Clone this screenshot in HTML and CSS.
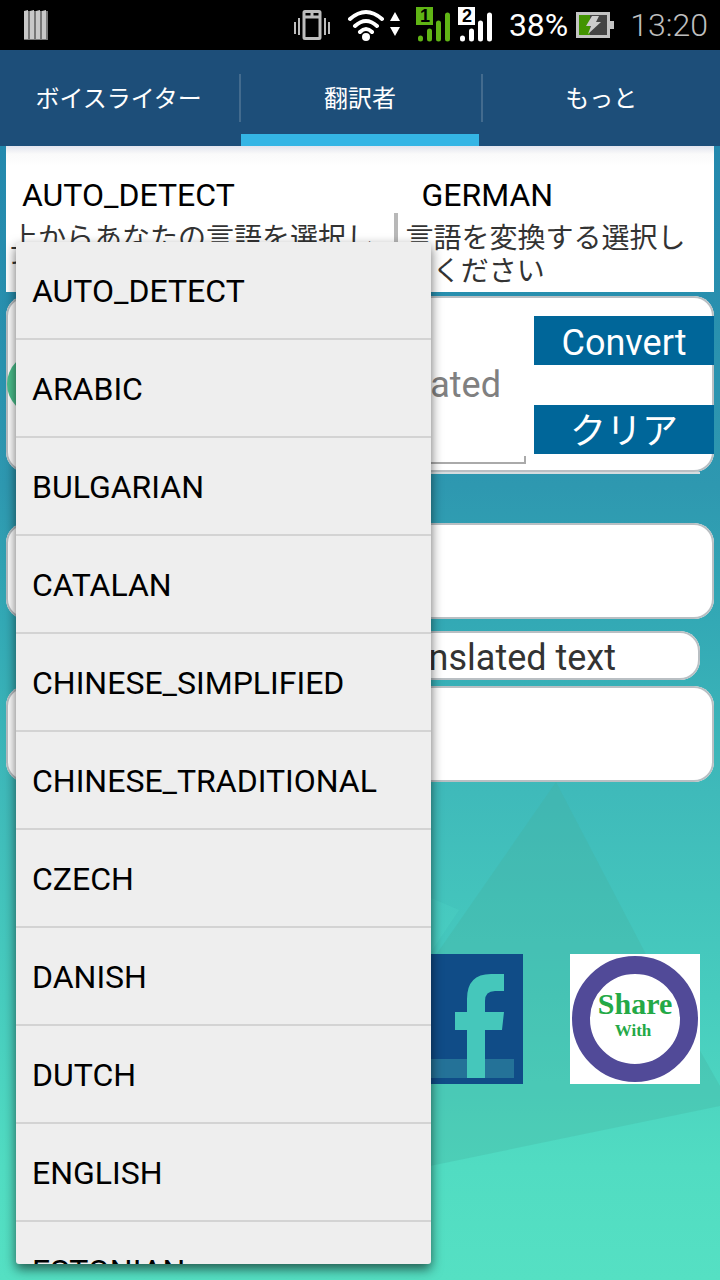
FILE: index.html
```html
<!DOCTYPE html>
<html lang="ja">
<head>
  <meta charset="UTF-8">
  <meta name="viewport" content="width=device-width, initial-scale=1">
  <title>翻訳者</title>
  <link rel="stylesheet" href="styles.css">
</head>
<body>

  <header class="status">
    <svg class="bars" width="24" height="30" viewBox="0 0 24 30">
      <path fill="#777" d="M0 1h24v29H0z"/>
      <path fill="#c8c8c8" d="M0 1l4-1v29H0zM6 1l4-1v29H6zM12 1l4-1v29h-4zM18 1l4-1v29h-4z"/>
    </svg>
    <svg width="38" height="34" viewBox="0 0 38 34">
      <path fill="none" stroke="#bdbdbd" stroke-width="3" d="M12 3.500h14a1 1 0 0 1 1 1v25a1 1 0 0 1-1 1H12a1 1 0 0 1-1-1v-25a1 1 0 0 1 1-1zM11 9h16M19 4v4"/>
      <path fill="none" stroke="#bdbdbd" stroke-width="2" d="M2 14v12M6 10v17M32 10v17M36 14v12"/>
    </svg>
    <svg class="wifi" width="54" height="34" viewBox="0 0 54 34">
      <g fill="none" stroke="#fff" stroke-width="4" stroke-linecap="round">
        <path d="M3 11q16-14 32 0M8 18q11-10 22 0M13 24q6-6 12 0"/>
      </g>
      <circle cx="19" cy="29" r="4" fill="#fff"/>
      <path fill="#fff" d="M48 4l5 9H43zM48 28l5-9H43z"/>
    </svg>
    <svg class="signal green" width="34" height="36" viewBox="0 0 34 36">
      <path class="fill" d="M0 0h17v18H0z"/>
      <text x="9" y="15" text-anchor="middle">1</text>
      <path class="wave" d="M4.500 31v1M13.500 24v8M22.500 16v16M31.500 8v24"/>
    </svg>
    <svg class="signal white" width="34" height="36" viewBox="0 0 34 36">
      <path class="fill" d="M0 0h17v18H0z"/>
      <text x="9" y="15" text-anchor="middle">2</text>
      <path class="wave" d="M4.500 31v1M13.500 24v8M22.500 16v16M31.500 8v24"/>
    </svg>
    <span class="percent">38%</span>
    <svg class="battery" width="38" height="26" viewBox="0 0 38 26">
      <path fill="#c4c4c4" d="M0 0h34v9h4v8h-4v9H0z"/>
      <path fill="#444" d="M3 3h28v20H3z"/>
      <path fill="#429400" d="M3 3h11v20H3z"/>
      <path fill="#ccc" d="M16 4h7l-3 6h5L12 22l3-8h-5z"/>
    </svg>
    <span class="clock">13:20</span>
  </header>

  <nav class="tabs">
    <a href="#voice">ボイスライター</a>
    <a href="#translator" class="active">翻訳者</a>
    <a href="#more">もっと</a>
  </nav>

  <main class="content">
    <svg class="backdrop" viewBox="0 0 720 1134" preserveAspectRatio="none">
      <path fill="#46b09f" fill-opacity=".3" d="M556 636L431 816 300 960v84l130-24 290-60v-20L650 816z"/>
      <path fill="#5ae6cd" fill-opacity=".18" d="M431 752l28 12-28 42z"/>
    </svg>

    <section class="languages">
      <div class="language from">
        <select id="fromLang">
          <option>AUTO_DETECT</option>
          <option>ENGLISH</option>
        </select>
        <label for="fromLang">上からあなたの言語を選択してください</label>
      </div>
      <div class="language to">
        <select id="toLang">
          <option>GERMAN</option>
          <option>ENGLISH</option>
        </select>
        <label for="toLang">言語を変換する選択してください</label>
      </div>
    </section>

    <form class="card entry">
      <button type="button" class="mic" aria-label="Speak"></button>
      <input type="text" class="source" placeholder="Text to be translated" aria-label="Text to be translated">
      <div class="actions">
        <button type="button">Convert</button>
        <button type="reset">クリア</button>
      </div>
    </form>
    <div class="rule"></div>

    <div class="card result"></div>
    <p class="card caption">Translated text</p>
    <div class="card output"></div>

    <div class="share">
      <a href="#facebook" aria-label="Facebook">
        <svg width="130" height="130" viewBox="0 0 130 130">
          <path fill="#104c87" d="M0 0h130v130H0z"/>
          <path fill="#247298" d="M10 105h111v19H10z"/>
          <path fill="#45c7bb" d="M111 20v17h-9q-10 0-10 10v11h19l-2 18H92v48H74V76H62V58h12V45q0-25 24-25z"/>
        </svg>
      </a>
      <a href="#share">
        <svg width="130" height="130" viewBox="0 0 130 130">
          <path fill="#fff" d="M0 0h130v130H0z"/>
          <circle cx="65" cy="65" r="54" fill="none" stroke="#514a98" stroke-width="18"/>
          <text class="share-big" x="65" y="60" text-anchor="middle">Share</text>
          <text class="share-small" x="63" y="82" text-anchor="middle">With</text>
        </svg>
      </a>
    </div>

    <ul class="dropdown">
      <li><button type="button">AUTO_DETECT</button></li>
      <li><button type="button">ARABIC</button></li>
      <li><button type="button">BULGARIAN</button></li>
      <li><button type="button">CATALAN</button></li>
      <li><button type="button">CHINESE_SIMPLIFIED</button></li>
      <li><button type="button">CHINESE_TRADITIONAL</button></li>
      <li><button type="button">CZECH</button></li>
      <li><button type="button">DANISH</button></li>
      <li><button type="button">DUTCH</button></li>
      <li><button type="button">ENGLISH</button></li>
      <li><button type="button">ESTONIAN</button></li>
    </ul>
  </main>

</body>
</html>
```
FILE: styles.css
```css
* {
  box-sizing: border-box;
}
body {
  margin: 0;
  min-height: 100vh;
  display: flex;
  flex-direction: column;
  font-family: Roboto, "Noto Sans CJK JP", sans-serif;
  color: #333;
}
button, input, select {
  font-family: inherit;
  border: 0;
  margin: 0;
  padding: 0;
}

/* status bar */
.status {
  display: flex;
  align-items: center;
  height: 50px;
  padding: 0 12px 0 24px;
  background: #000;
  color: #fff;
  font-size: 32px;
  line-height: 50px;
}
.bars {
  margin-right: auto;
}
.wifi {
  margin: 0 15px 0 16px;
}
.signal {
  margin-right: 8px;
}
.signal text {
  font: bold 18px "Liberation Sans", sans-serif;
}
.wave {
  fill: none;
  stroke-width: 5;
  stroke-linecap: round;
}
.green .fill {
  fill: #60b515;
}
.green .wave {
  stroke: #60b515;
}
.white .fill {
  fill: #fff;
}
.white .wave {
  stroke: #fff;
}
.percent {
  margin-left: 9px;
}
.battery {
  margin: 0 16px 0 8px;
}
.clock {
  color: #bebebe;
  font-weight: 300;
}

/* tabs */
.tabs {
  display: flex;
  gap: 2px;
  height: 96px;
  background: #1d4e79;
}
.tabs a {
  flex: 1;
  display: flex;
  align-items: center;
  justify-content: center;
  padding-bottom: 4px;
  color: #fff;
  font-size: 24px;
  text-decoration: none;
}
.tabs a + a {
  border-left: 2px solid;
  border-image: linear-gradient(transparent 24px, #436b8e 24px, #436b8e 72px, transparent 72px) 0 0 0 2;
}
.tabs .active {
  box-shadow: inset 0 -12px #34b5e5;
}

.content {
  position: relative;
  flex: 1;
  padding: 0 6px;
  background: linear-gradient(#2388ad, #2e98b0 30%, #33a9b5 42%, #3fbaba 57%, #47ccbe 75%, #51dcc2 90%, #55e0c3);
}
.backdrop {
  position: absolute;
  top: 0;
  left: 0;
  width: 100%;
  height: 100%;
}
.languages, .card, .rule, .share {
  position: relative;
}

/* language pickers */
.languages {
  display: flex;
  height: 146px;
  background: linear-gradient(#e2e4ee, #fafafa 8px, #fff 20px);
}
.language {
  display: flex;
  flex-direction: column;
  padding-top: 25px;
}
.language select {
  appearance: none;
  height: 48px;
  padding-left: 16px;
  background: none;
  color: #000;
  font-size: 32px;
}
.language label {
  padding-top: 3px;
  font-size: 28px;
  line-height: 33px;
}
.from {
  flex: 5;
  padding-right: 16px;
  background: linear-gradient(#b8b8b8, #b8b8b8) right 67px / 4px 100% no-repeat;
}
.from label {
  padding-left: 4px;
}
.to {
  flex: 4;
  padding-left: 8px;
  padding-right: 8px;
}

/* white rounded panels */
.card {
  margin: 0;
  background: #fff;
  border-radius: 20px;
  box-shadow: inset 0 0 0 2px #b9bfc3;
}
.entry {
  display: flex;
  align-items: center;
  height: 176px;
  margin-top: 4px;
}
.mic {
  width: 62px;
  height: 62px;
  margin-left: 1px;
  border-radius: 50%;
  background: #4bc08d;
}
.source {
  flex: 1;
  align-self: stretch;
  min-width: 0;
  margin: 8px 8px 8px 4px;
  padding: 2px 25px 0 0;
  text-align: right;
  font-size: 36px;
  background:
    linear-gradient(#aaa, #aaa) right bottom / 100% 2px no-repeat,
    linear-gradient(#aaa, #aaa) right bottom / 2px 8px no-repeat;
}
.source::placeholder {
  color: #808080;
}
.actions {
  display: flex;
  flex-direction: column;
  gap: 40px;
  width: 180px;
  padding-top: 2px;
}
.actions button {
  height: 49px;
  padding-top: 6px;
  background: #006699;
  color: #fff;
  font-size: 36px;
  line-height: 43px;
}
.rule {
  height: 2px;
  margin: 0 14px;
  background: #d5dcdf;
}
.result {
  height: 96px;
  margin-top: 49px;
}
.caption {
  margin: 12px 14px 6px;
  padding: 6px 84px 0 0;
  font-size: 36px;
  line-height: 43px;
  text-align: right;
}
.output {
  height: 96px;
}

.share {
  display: flex;
  justify-content: flex-end;
  gap: 47px;
  margin: 172px 14px 0;
}
.share svg {
  display: block;
}
.share-big, .share-small {
  fill: #24a946;
  font-family: "Liberation Serif", serif;
  font-weight: bold;
}
.share-big {
  font-size: 30px;
}
.share-small {
  font-size: 17px;
}

/* open language list */
.dropdown {
  position: absolute;
  top: 96px;
  bottom: 16px;
  left: 16px;
  width: 415px;
  margin: 0;
  padding: 0;
  overflow: hidden;
  list-style: none;
  background: #eee;
  border-radius: 3px;
  box-shadow: 0 5px 12px rgba(0, 0, 0, 0.6);
}
.dropdown li {
  border-bottom: 2px solid #d3d3d3;
}
.dropdown button {
  display: block;
  width: 100%;
  height: 96px;
  padding: 2px 16px 0;
  background: none;
  color: #000;
  font-size: 32px;
  text-align: left;
}
```
